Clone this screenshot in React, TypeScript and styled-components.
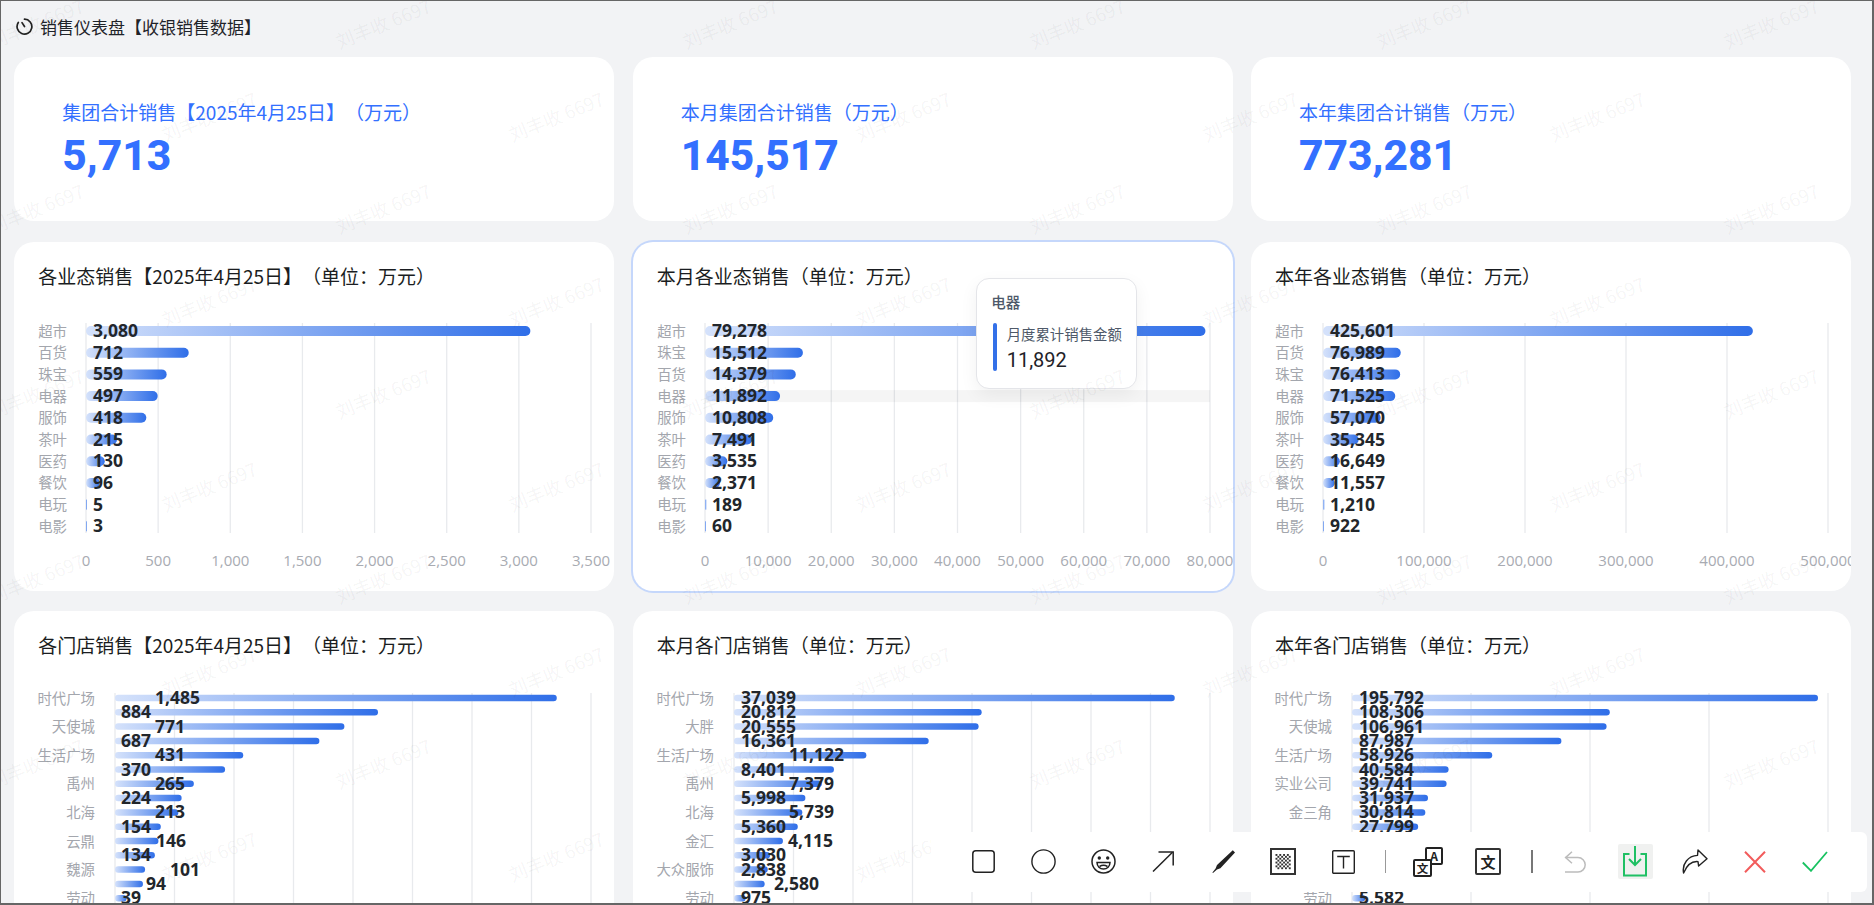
import React from "react";
import styled, { createGlobalStyle } from "styled-components";

const CJK = `"Noto Sans CJK SC", "Noto Sans", sans-serif`;
const LATIN = `"Open Sans", "Noto Sans CJK SC", sans-serif`;

const GlobalStyle = createGlobalStyle`
  html, body {
    margin: 0;
    height: 100%;
    overflow: hidden;
    font-family: ${CJK};
    text-spacing-trim: space-all;
  }
`;

const Frame = styled.div`
  position: relative;
  box-sizing: border-box;
  height: 100vh;
  overflow: hidden;
  background: #f2f3f5;
  border-style: solid;
  border-color: #666;
  border-width: 1px 2px 2.5px 1px;
`;

const Header = styled.header`
  display: flex;
  align-items: center;
  gap: 7px;
  height: 50px;
  margin-bottom: 6px;
  padding-left: 15px;
  color: #1f2329;
  font-size: 17px;
`;

const Dashboard = styled.main`
  display: grid;
  grid-template-columns: repeat(3, 600px);
  grid-template-rows: 164px 349px 349px;
  gap: 20.5px 18.4px;
  padding-left: 13.3px;
`;

const StatCard = styled.section`
  box-sizing: border-box;
  padding: 42px 0 0 48px;
  background: #fff;
  border-radius: 20px;
`;

const StatTitle = styled.div`
  color: #3370ff;
  font-size: 19px;
  line-height: 26px;
`;

const StatValue = styled.div`
  margin-top: 6px;
  color: #3370ff;
  font-family: Roboto, sans-serif;
  font-size: 42.5px;
  font-weight: 800;
  line-height: 50px;
`;

const ChartCard = styled.section<{ $active?: boolean }>`
  position: relative;
  overflow: hidden;
  background: #fff;
  border-radius: 20px;
  box-shadow: ${(p) => (p.$active ? "0 0 0 2px #c5d7fb" : "none")};
`;

const ChartTitle = styled.h3`
  margin: 0;
  padding: 22px 0 0 24px;
  height: 36px;
  color: #1a1d21;
  font-size: 19px;
  font-weight: 400;
  line-height: 24px;
`;

const ChartSvg = styled.svg`
  display: block;
`;

const CategoryLabel = styled.text`
  fill: #a3a6ad;
  font-family: ${CJK};
  font-size: 14.4px;
  text-anchor: end;
  dominant-baseline: central;
`;

const ValueLabel = styled.text`
  fill: #22262b;
  font-family: ${LATIN};
  font-size: 17.5px;
  font-weight: 700;
  dominant-baseline: central;
`;

const TickLabel = styled.text`
  fill: #a8abb2;
  font-family: ${LATIN};
  font-size: 15px;
  text-anchor: middle;
  dominant-baseline: central;
`;

const Tooltip = styled.div`
  position: absolute;
  left: 343px;
  top: 36px;
  box-sizing: border-box;
  width: 161px;
  height: 111px;
  padding: 13px 0 0 14.5px;
  background: #fff;
  border: 1px solid #e4e5e9;
  border-radius: 13px;
  box-shadow: 0 6px 18px rgba(0, 0, 0, 0.06);
`;

const TooltipTitle = styled.div`
  color: #4e5969;
  font-size: 14.5px;
  font-weight: 500;
  line-height: 20px;
`;

const TooltipRow = styled.div`
  display: flex;
  gap: 10px;
  margin-top: 11px;
  margin-left: 1.5px;
`;

const TooltipMarker = styled.span`
  width: 4px;
  height: 48px;
  background: #3370e8;
  border-radius: 2px;
`;

const TooltipColumn = styled.div`
  display: flex;
  flex-direction: column;
  gap: 3px;
`;

const TooltipName = styled.span`
  color: #4e5969;
  font-size: 14.4px;
  line-height: 22px;
  white-space: nowrap;
`;

const TooltipValue = styled.span`
  color: #1f2329;
  font-family: Roboto, sans-serif;
  font-size: 20px;
  line-height: 24px;
`;

const WatermarkLayer = styled.div`
  position: absolute;
  inset: 0;
  overflow: hidden;
  pointer-events: none;
`;

const WatermarkText = styled.span`
  position: absolute;
  transform: translate(-50%, -50%) rotate(-22deg);
  color: rgba(0, 0, 0, 0.05);
  font-size: 18.5px;
  white-space: nowrap;
`;

const Toolbar = styled.div`
  position: absolute;
  right: 5px;
  bottom: 11.5px;
  display: flex;
  align-items: center;
  height: 60px;
  padding: 0 22px;
  background: #fff;
  border-radius: 6px;
`;

const Tool = styled.button`
  display: flex;
  align-items: center;
  justify-content: center;
  width: 60px;
  height: 60px;
  padding: 0;
  background: none;
  border: 0;
`;

const ToolBox = styled.span<{ $active?: boolean }>`
  display: flex;
  align-items: center;
  justify-content: center;
  width: 35px;
  height: 35px;
  background: ${(p) => (p.$active ? "#f0f1f0" : "transparent")};
  border-radius: 2px;
`;

const ToolDivider = styled.span<{ $strong?: boolean }>`
  display: block;
  width: ${(p) => (p.$strong ? "2px" : "1px")};
  height: 23px;
  margin: ${(p) => (p.$strong ? "0 12.5px" : "0 12px")};
  background: ${(p) => (p.$strong ? "#777" : "#999")};
`;

const GlyphText = styled.text`
  fill: #222;
  font-family: ${CJK};
  font-weight: 700;
  text-anchor: middle;
  dominant-baseline: central;
`;

type Row = { name?: string; value?: number; labelAt?: number };

type ChartProps = {
  id: string;
  rows: Row[];
  max: number;
  step: number;
  axisX: number;
  labelX: number;
  firstY: number;
  pitch: number;
  barH: number;
  gridTop: number;
  gridBottom: number;
  showTicks?: boolean;
  highlight?: number;
};

const PLOT_WIDTH = 505;

const fmt = (n: number) => n.toLocaleString("en-US");

const BarChart = ({ id, rows, max, step, axisX, labelX, firstY, pitch, barH, gridTop, gridBottom, showTicks, highlight }: ChartProps) => {
  const plot = showTicks ? PLOT_WIDTH : 476;
  const scale = plot / max;
  const ticks: number[] = [];
  for (let t = 0; t <= max; t += step) ticks.push(t);

  return (
    <ChartSvg width={600} height={291} viewBox="0 0 600 291">
      <defs>
        <linearGradient id={id}>
          <stop offset="0" stopColor="#d5e2fb" />
          <stop offset="1" stopColor="#2f6ee8" />
        </linearGradient>
      </defs>

      {ticks.map((t) => (
        <line key={t} x1={axisX + t * scale} x2={axisX + t * scale} y1={gridTop} y2={gridBottom} stroke="#e8eaed" strokeWidth={1.3} />
      ))}

      {highlight !== undefined && (
        <rect x={axisX} y={firstY + pitch * highlight - 6} width={plot} height={12} fill="#000" opacity={0.04} />
      )}

      {rows.map((r, i) => {
        const cy = firstY + pitch * i;
        if (r.value === undefined) return null;
        return (
          <g key={i}>
            {r.name && <CategoryLabel x={labelX} y={cy - 1}>{r.name}</CategoryLabel>}
            <rect x={axisX} y={cy - barH / 2} width={Math.max(r.value * scale, 1)} height={barH} rx={r.value * scale > barH ? barH / 2 : 0} fill={`url(#${id})`} />
            <ValueLabel x={axisX + (r.labelAt ?? 7)} y={cy - 1}>{fmt(r.value)}</ValueLabel>
          </g>
        );
      })}

      {showTicks && ticks.map((t) => (
        <TickLabel key={t} x={axisX + t * scale} y={259.5}>{fmt(t)}</TickLabel>
      ))}
    </ChartSvg>
  );
};

const formatRows = (data: [string, number][]): Row[] => data.map(([name, value]) => ({ name, value }));

const dayFormats = formatRows([["超市", 3080], ["百货", 712], ["珠宝", 559], ["电器", 497], ["服饰", 418], ["茶叶", 215], ["医药", 130], ["餐饮", 96], ["电玩", 5], ["电影", 3]]);
const monthFormats = formatRows([["超市", 79278], ["珠宝", 15512], ["百货", 14379], ["电器", 11892], ["服饰", 10808], ["茶叶", 7491], ["医药", 3535], ["餐饮", 2371], ["电玩", 189], ["电影", 60]]);
const yearFormats = formatRows([["超市", 425601], ["百货", 76989], ["珠宝", 76413], ["电器", 71525], ["服饰", 57070], ["茶叶", 35345], ["医药", 16649], ["餐饮", 11557], ["电玩", 1210], ["电影", 922]]);

const dayStores: Row[] = [
  { name: "时代广场", value: 1485, labelAt: 40 }, { value: 884, labelAt: 6 },
  { name: "天使城", value: 771, labelAt: 40 }, { value: 687, labelAt: 6 },
  { name: "生活广场", value: 431, labelAt: 40 }, { value: 370, labelAt: 6 },
  { name: "禹州", value: 265, labelAt: 40 }, { value: 224, labelAt: 6 },
  { name: "北海", value: 213, labelAt: 40 }, { value: 154, labelAt: 6 },
  { name: "云鼎", value: 146, labelAt: 41 }, { value: 134, labelAt: 6 },
  { name: "魏源", value: 101, labelAt: 55 }, { value: 94, labelAt: 31 },
  { name: "劳动", value: 39, labelAt: 6 },
];

const monthStores: Row[] = [
  { name: "时代广场", value: 37039 }, { value: 20812 },
  { name: "大胖", value: 20555 }, { value: 16361 },
  { name: "生活广场", value: 11122, labelAt: 55 }, { value: 8401 },
  { name: "禹州", value: 7379, labelAt: 55 }, { value: 5998 },
  { name: "北海", value: 5739, labelAt: 55 }, { value: 5360 },
  { name: "金汇", value: 4115, labelAt: 54 }, { value: 3030 },
  { name: "大众服饰", value: 2838 }, { value: 2580, labelAt: 40 },
  { name: "劳动", value: 975 },
];

// rows 10 to 13 sit behind the toolbar in the screenshot
const yearStores: Row[] = [
  { name: "时代广场", value: 195792 }, { value: 108306 },
  { name: "天使城", value: 106961 }, { value: 87987 },
  { name: "生活广场", value: 58926 }, { value: 40584 },
  { name: "实业公司", value: 39741 }, { value: 31937 },
  { name: "金三角", value: 30814 }, { value: 27799 },
  {}, {}, {}, {},
  { name: "劳动", value: 5582 },
];

const formatLayout = { axisX: 72, labelX: 53, firstY: 31, pitch: 21.7, barH: 10, gridTop: 23, gridBottom: 233, showTicks: true };
const storeLayout = { axisX: 101, labelX: 81, firstY: 29, pitch: 14.3, barH: 6.5, gridTop: 24, gridBottom: 291 };

const ClockIcon = () => (
  <svg width="17" height="17" viewBox="0 0 17 17" fill="none" stroke="#222" strokeWidth="1.7" strokeLinecap="round">
    <path d="M8.5 1.2a7.4 7.4 0 1 1-6.2 3.3" />
    <path d="M8.5 8.5L6 4.6" />
  </svg>
);

const RectIcon = () => (
  <svg width="23" height="23" viewBox="0 0 23 23" fill="none" stroke="#222" strokeWidth="1.5">
    <rect x="0.8" y="0.8" width="21.4" height="21.4" rx="3" />
  </svg>
);

const CircleIcon = () => (
  <svg width="25" height="25" viewBox="0 0 25 25" fill="none" stroke="#222" strokeWidth="1.4">
    <circle cx="12.5" cy="12.5" r="11.6" />
  </svg>
);

const SmileIcon = () => (
  <svg width="25" height="25" viewBox="0 0 25 25" fill="none" stroke="#222" strokeWidth="1.5">
    <circle cx="12.5" cy="12.5" r="11.5" />
    <circle cx="8.3" cy="9" r="1.7" fill="#222" stroke="none" />
    <circle cx="16.7" cy="9" r="1.7" fill="#222" stroke="none" />
    <path d="M6 13.5h13c0 3.8-2.9 6.5-6.5 6.5S6 17.3 6 13.5z" />
    <path d="M8.5 17.5c2.4-1.4 5.6-1.4 8 0" />
  </svg>
);

const ArrowIcon = () => (
  <svg width="22" height="21" viewBox="0 0 22 21" fill="none" stroke="#222" strokeWidth="1.5">
    <path d="M1 20.5L20.5 1.2" />
    <path d="M6.5 1h14.7v13.5" />
  </svg>
);

const PenIcon = () => (
  <svg width="23" height="23" viewBox="0 0 23 23">
    <path d="M20.8 0.2L23 2.4L8.4 18.2L5 19.6L1 23L0.4 22.4L3.6 18.4L5 15z" fill="#222" />
  </svg>
);

const MosaicIcon = () => {
  const cells: React.ReactNode[] = [];
  for (let r = 0; r < 8; r++) {
    for (let c = 0; c < 8; c++) {
      if ((r + c) % 2 === 0) cells.push(<rect key={`${r}-${c}`} x={5.5 + c * 1.9} y={6 + r * 1.9} width={1.9} height={1.9} fill="#333" />);
    }
  }
  return (
    <svg width="26" height="27" viewBox="0 0 26 27" fill="none">
      <rect x="1" y="1" width="24" height="25" stroke="#333" strokeWidth="2" />
      {cells}
    </svg>
  );
};

const TextIcon = () => (
  <svg width="23" height="24" viewBox="0 0 23 24" fill="none" stroke="#222" strokeWidth="1.4">
    <rect x="0.7" y="0.7" width="21.6" height="22.6" rx="1" />
    <path d="M5.2 6.5h12.6M11.5 6.5v12" />
  </svg>
);

const TranslatePairIcon = () => (
  <svg width="30" height="30" viewBox="0 0 30 30">
    <rect x="13" y="1" width="16" height="16" rx="1" fill="#fff" stroke="#222" strokeWidth="2" />
    <GlyphText x="21" y="8.5" fontSize="12">A</GlyphText>
    <rect x="1" y="13" width="17" height="16" rx="1" fill="#fff" stroke="#222" strokeWidth="2" />
    <GlyphText x="9.5" y="21" fontSize="11.5">文</GlyphText>
  </svg>
);

const TranslateIcon = () => (
  <svg width="26" height="27" viewBox="0 0 26 27">
    <rect x="1" y="1" width="24" height="25" rx="1" fill="#fff" stroke="#333" strokeWidth="2" />
    <GlyphText x="13" y="13.5" fontSize="15" fontWeight="400">文</GlyphText>
  </svg>
);

const UndoIcon = () => (
  <svg width="22" height="22" viewBox="0 0 22 22" fill="none" stroke="#bcbcbc" strokeWidth="1.5">
    <path d="M8 0.8L1.6 6.6L8 12.2" />
    <path d="M1.6 6.6H14a7 7 0 0 1 0 14.4H1" />
  </svg>
);

const SaveIcon = () => (
  <svg width="24" height="31" viewBox="0 0 24 31" fill="none" stroke="#1fc064" strokeWidth="2">
    <path d="M6.5 8H1v21.5h22V8h-5.5" />
    <path d="M12 0v18.5M6 13l6 6 6-6" />
  </svg>
);

const ShareIcon = () => (
  <svg width="26" height="25" viewBox="0 0 26 25" fill="none" stroke="#222" strokeWidth="1.4" strokeLinejoin="round">
    <path d="M16 1L25 9.8L16.6 17L16 12.6C10 12 4.8 16.2 1.6 24C-0.3 15 6.2 6.8 15.5 6.4z" />
  </svg>
);

const CloseIcon = () => (
  <svg width="22" height="22" viewBox="0 0 22 22" fill="none" stroke="#f25c5c" strokeWidth="2">
    <path d="M1 0.8L21 21.2M21 0.8L1 21.2" />
  </svg>
);

const CheckIcon = () => (
  <svg width="26" height="21" viewBox="0 0 26 21" fill="none" stroke="#18c261" strokeWidth="1.8">
    <path d="M0.8 11.5L9 19.8L25 1" />
  </svg>
);

const watermarks: { x: number; y: number }[] = [];
for (let i = 0; i < 10; i++) {
  for (let j = -1; j < 6; j++) {
    watermarks.push({ x: (i % 2 === 0 ? 35 : 208) + 347 * j, y: 22 + 92.5 * i });
  }
}

const App = () => {
  return (
    <Frame>
      <GlobalStyle />
      <Header>
        <ClockIcon />
        <span>销售仪表盘【收银销售数据】</span>
      </Header>

      <Dashboard>
        <StatCard>
          <StatTitle>集团合计销售【2025年4月25日】（万元）</StatTitle>
          <StatValue>5,713</StatValue>
        </StatCard>
        <StatCard>
          <StatTitle>本月集团合计销售（万元）</StatTitle>
          <StatValue>145,517</StatValue>
        </StatCard>
        <StatCard>
          <StatTitle>本年集团合计销售（万元）</StatTitle>
          <StatValue>773,281</StatValue>
        </StatCard>

        <ChartCard>
          <ChartTitle>各业态销售【2025年4月25日】（单位：万元）</ChartTitle>
          <BarChart id="bar-a" rows={dayFormats} max={3500} step={500} {...formatLayout} />
        </ChartCard>
        <ChartCard $active>
          <ChartTitle>本月各业态销售（单位：万元）</ChartTitle>
          <BarChart id="bar-b" rows={monthFormats} max={80000} step={10000} highlight={3} {...formatLayout} />
          <Tooltip>
            <TooltipTitle>电器</TooltipTitle>
            <TooltipRow>
              <TooltipMarker />
              <TooltipColumn>
                <TooltipName>月度累计销售金额</TooltipName>
                <TooltipValue>11,892</TooltipValue>
              </TooltipColumn>
            </TooltipRow>
          </Tooltip>
        </ChartCard>
        <ChartCard>
          <ChartTitle>本年各业态销售（单位：万元）</ChartTitle>
          <BarChart id="bar-c" rows={yearFormats} max={500000} step={100000} {...formatLayout} />
        </ChartCard>

        <ChartCard>
          <ChartTitle>各门店销售【2025年4月25日】（单位：万元）</ChartTitle>
          <BarChart id="bar-d" rows={dayStores} max={1600} step={200} {...storeLayout} />
        </ChartCard>
        <ChartCard>
          <ChartTitle>本月各门店销售（单位：万元）</ChartTitle>
          <BarChart id="bar-e" rows={monthStores} max={40000} step={5000} {...storeLayout} />
        </ChartCard>
        <ChartCard>
          <ChartTitle>本年各门店销售（单位：万元）</ChartTitle>
          <BarChart id="bar-f" rows={yearStores} max={200000} step={50000} {...storeLayout} />
        </ChartCard>
      </Dashboard>

      <WatermarkLayer>
        {watermarks.map((w, i) => (
          <WatermarkText key={i} style={{ left: w.x, top: w.y }}>刘丰收 6697</WatermarkText>
        ))}
      </WatermarkLayer>

      <Toolbar>
        <Tool><RectIcon /></Tool>
        <Tool><CircleIcon /></Tool>
        <Tool><SmileIcon /></Tool>
        <Tool><ArrowIcon /></Tool>
        <Tool><PenIcon /></Tool>
        <Tool><MosaicIcon /></Tool>
        <Tool><TextIcon /></Tool>
        <ToolDivider />
        <Tool><TranslatePairIcon /></Tool>
        <Tool><TranslateIcon /></Tool>
        <ToolDivider $strong />
        <Tool><UndoIcon /></Tool>
        <Tool><ToolBox $active><SaveIcon /></ToolBox></Tool>
        <Tool><ShareIcon /></Tool>
        <Tool><CloseIcon /></Tool>
        <Tool><CheckIcon /></Tool>
      </Toolbar>
    </Frame>
  );
};

export default App;
